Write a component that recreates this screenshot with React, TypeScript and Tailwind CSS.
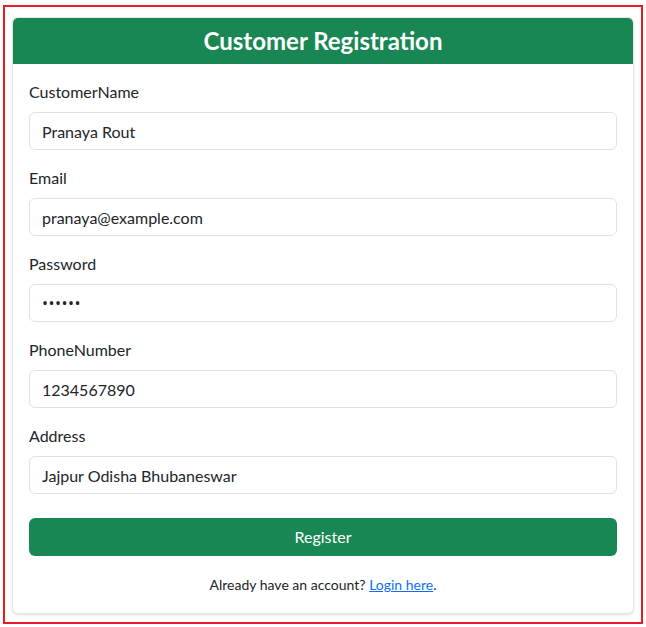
import React, { useState } from "react";

const font = { fontFamily: '"Segoe UI", Lato, "Open Sans", sans-serif' };

const fields = [
  { label: "CustomerName", name: "name", type: "text", value: "Pranaya Rout" },
  { label: "Email", name: "email", type: "email", value: "pranaya@example.com" },
  { label: "Password", name: "password", type: "password", value: "123456" },
  { label: "PhoneNumber", name: "phone", type: "text", value: "1234567890" },
  { label: "Address", name: "address", type: "text", value: "Jajpur Odisha Bhubaneswar" },
];

const App: React.FC = () => {
  const [form, setForm] = useState<Record<string, string>>(() =>
    Object.fromEntries(fields.map((f) => [f.name, f.value]))
  );

  return (
    <div className="bg-white w-[646px] h-[627px] pt-[5px] pl-[3px]" style={font}>
      <div className="w-[640px] h-[619px] border-2 border-[#e81c24] pt-[10px] pl-[7px]">
        <div className="w-[622px] bg-white border border-[#e3e5e8] rounded-md shadow-sm overflow-hidden text-[#212529]">
          <div className="bg-[#198754] h-[46px] flex items-center justify-center">
            <h3 className="text-white text-[24px] font-bold leading-none">Customer Registration</h3>
          </div>
          <div className="p-4">
            {fields.map((f) => (
              <div key={f.name} className="mb-4">
                <label className="block text-[16px] leading-6 mb-2">{f.label}</label>
                <input
                  type={f.type}
                  value={form[f.name]}
                  onChange={(e) => setForm((prev) => ({ ...prev, [f.name]: e.target.value }))}
                  className="block w-full h-[38px] px-3 text-[16px] border border-[#dee2e6] rounded-md outline-none text-[#212529]"
                  style={
                    f.type == "password"
                      ? { fontFamily: '"Open Sans", sans-serif', letterSpacing: "0.5px" }
                      : font
                  }
                />
              </div>
            ))}
            <button
              className="mt-6 block w-full h-[38px] bg-[#198754] text-white text-[16px] rounded-md"
              style={font}
            >
              Register
            </button>
            <p className="mt-4 text-center leading-6">
              <span className="text-[14px]">
                Already have an account?{" "}
                <a href="#" className="text-[#0d6efd] underline">
                  Login here
                </a>
                .
              </span>
            </p>
          </div>
        </div>
      </div>
    </div>
  );
};

export default App;
